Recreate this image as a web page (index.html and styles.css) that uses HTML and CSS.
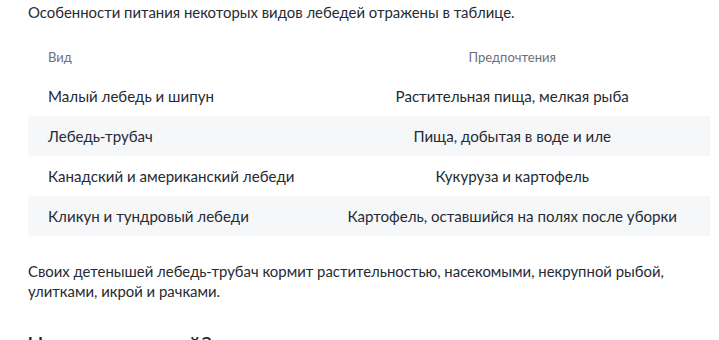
FILE: index.html
```html
<!DOCTYPE html>
<html lang="ru">
<head>
<meta charset="utf-8">
<link rel="stylesheet" href="styles.css">
</head>
<body>
<div class="article">
  <p class="text first">Особенности питания некоторых видов лебедей отражены в таблице.</p>
  <table class="food">
    <thead>
      <tr><th class="c1">Вид</th><th class="c2">Предпочтения</th></tr>
    </thead>
    <tbody>
      <tr><td class="c1">Малый лебедь и шипун</td><td class="c2">Растительная пища, мелкая рыба</td></tr>
      <tr class="alt"><td class="c1">Лебедь-трубач</td><td class="c2">Пища, добытая в воде и иле</td></tr>
      <tr><td class="c1">Канадский и американский лебеди</td><td class="c2">Кукуруза и картофель</td></tr>
      <tr class="alt"><td class="c1">Кликун и тундровый лебеди</td><td class="c2">Картофель, оставшийся на полях после уборки</td></tr>
    </tbody>
  </table>
  <p class="text">Своих детенышей лебедь-трубач кормит растительностью, насекомыми, некрупной рыбой, улитками, икрой и рачками.</p>
  <h2 class="heading">Что едят зимой?</h2>
</div>
</body>
</html>
```
FILE: styles.css
```css
html, body {
  margin: 0;
  padding: 0;
  background: #ffffff;
}
.article {
  padding: 2px 9px 0 28px;
  font-family: Lato, "Liberation Sans", sans-serif;
  color: #262a33;
  font-size: 14.9px;
  line-height: 20px;
}
.text {
  margin: 0;
}
.first {
  margin-bottom: 15px;
}
.food {
  width: 682px;
  border-collapse: collapse;
  margin-bottom: 25px;
}
.food th {
  font-weight: 400;
  font-size: 13px;
  color: #6e6e7e;
  height: 39px;
  padding: 0 20px;
}
.food td {
  height: 40px;
  padding: 0 20px;
  font-size: 15.1px;
  white-space: nowrap;
}
.food .c1 {
  text-align: left;
  width: 246px;
}
.food .c2 {
  text-align: center;
}
.food .alt {
  background: #f6f7f9;
}
.heading {
  margin: 28px 0 0;
  font-size: 24px;
  line-height: 32px;
  font-weight: 400;
}
```
